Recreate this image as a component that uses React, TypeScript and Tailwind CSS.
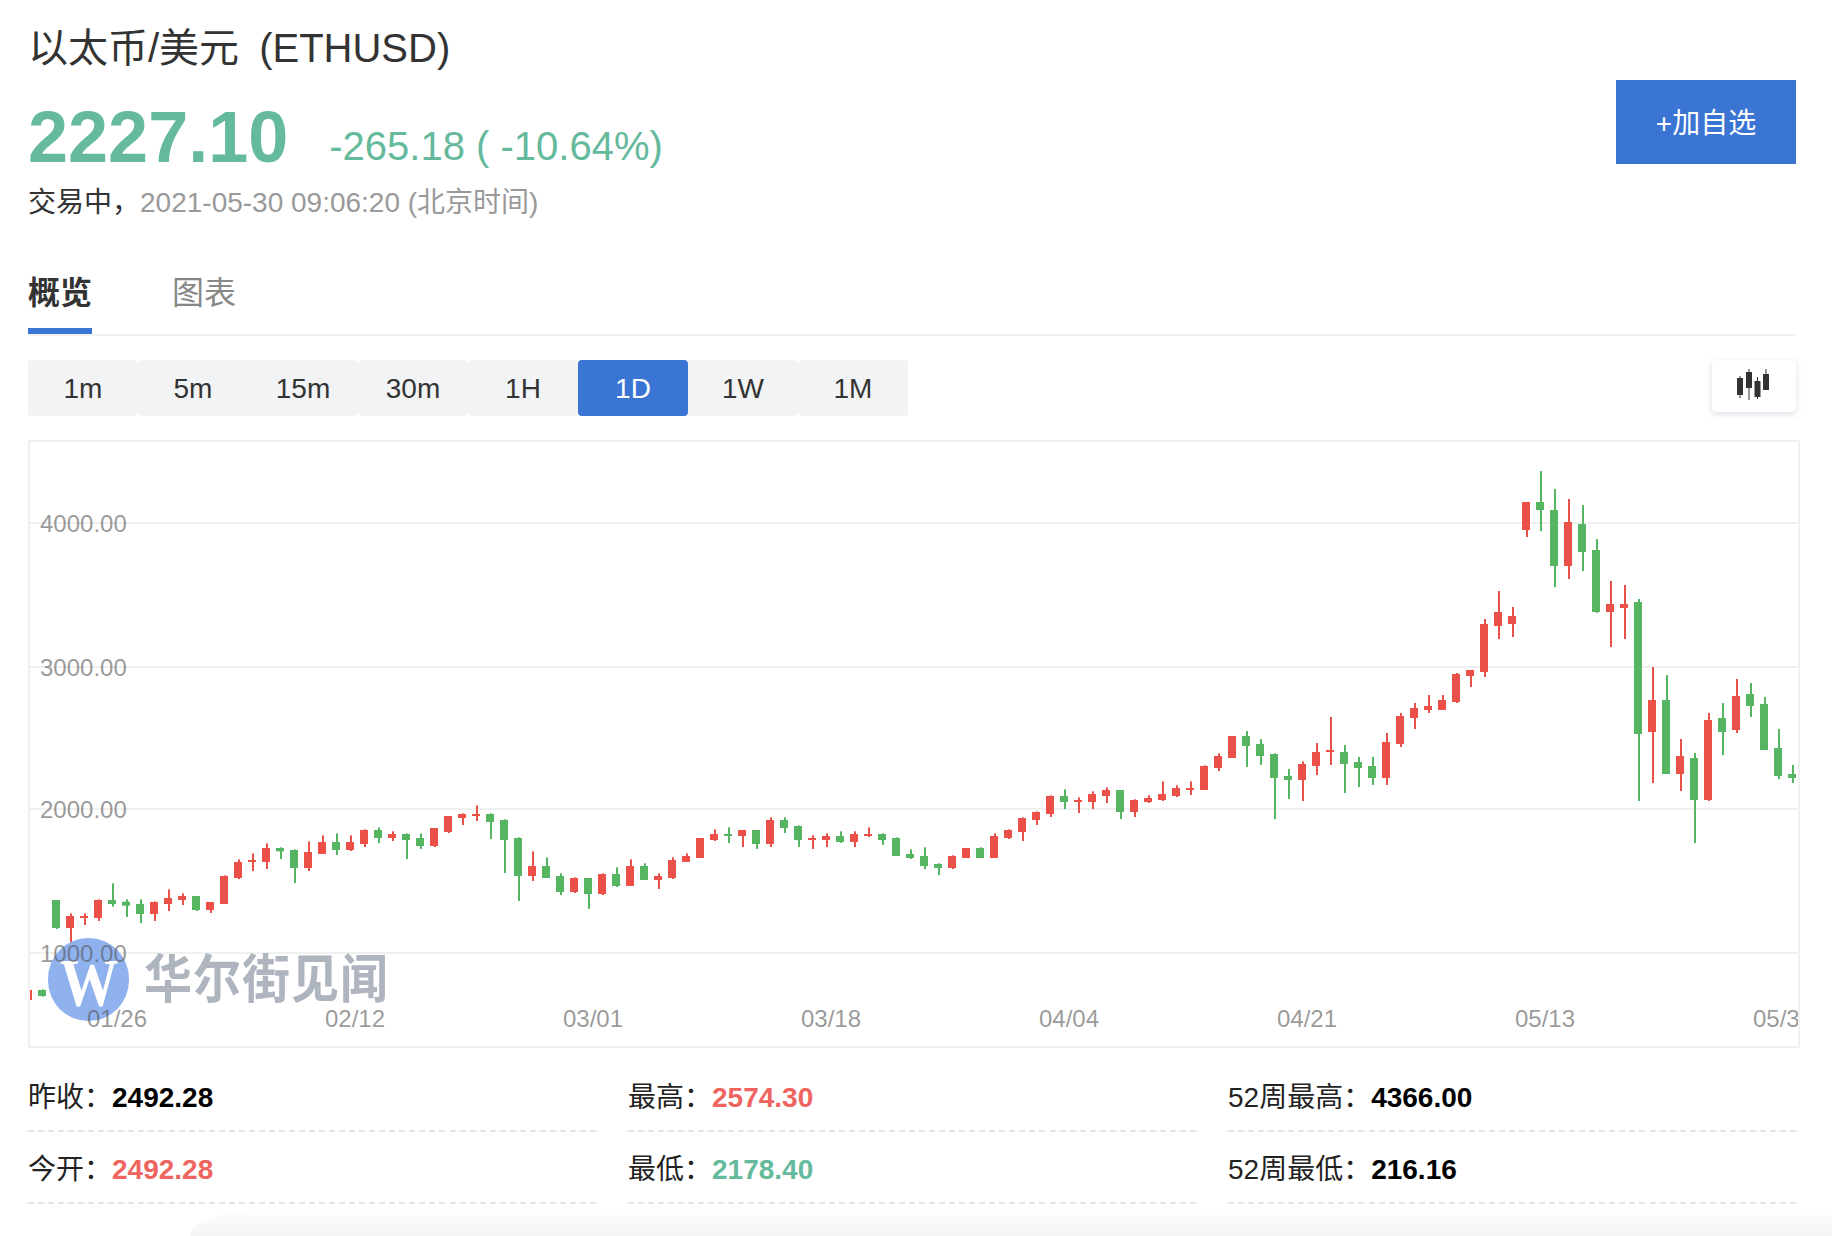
type Candle = [number, number, number, number, number]

// [up, wickTop, bodyTop, bodyBottom, wickBottom], read off the chart, y = page px * 3 from 740
const first: Candle[] = [
  [1, 750, 750, 780, 780], [0, 748, 750, 768, 770], [0, 480, 480, 564, 567], [1, 520, 528, 564, 615],
  [1, 520, 528, 534, 555], [1, 478, 480, 534, 543], [0, 430, 480, 492, 500], [0, 478, 485, 497, 531],
  [0, 478, 492, 522, 549], [1, 484, 486, 522, 543], [1, 448, 474, 492, 513], [1, 460, 468, 480, 495],
  [0, 468, 468, 510, 513], [1, 486, 486, 510, 519], [1, 406, 408, 492, 492], [1, 358, 366, 414, 417],
  [1, 340, 360, 366, 393], [1, 310, 324, 366, 387], [0, 322, 324, 334, 357], [0, 328, 330, 384, 429],
  [1, 304, 336, 384, 393], [1, 286, 306, 342, 342], [0, 280, 306, 330, 345], [1, 286, 306, 330, 333],
  [1, 268, 270, 312, 321], [0, 262, 270, 294, 309], [1, 274, 282, 294, 303], [0, 280, 282, 300, 357],
  [0, 280, 294, 318, 327], [1, 264, 264, 318, 321], [1, 228, 228, 276, 279], [1, 220, 222, 234, 255],
  [1, 196, 222, 228, 243], [0, 220, 222, 246, 297], [0, 238, 240, 300, 399], [0, 292, 294, 408, 483],
  [1, 334, 378, 408, 423], [0, 352, 378, 414, 414], [0, 400, 408, 456, 465], [1, 412, 414, 456, 459],
  [0, 414, 414, 462, 507], [1, 400, 402, 462, 465], [0, 382, 402, 438, 441], [1, 358, 378, 438, 438],
  [0, 370, 378, 420, 420], [1, 400, 408, 420, 447], [1, 352, 360, 414, 417], [1, 340, 348, 366, 366],
  [1, 294, 294, 354, 354], [1, 268, 282, 300, 303], [0, 262, 282, 288, 309], [1, 270, 270, 288, 321],
  [0, 270, 270, 312, 327], [1, 232, 240, 312, 321], [0, 232, 240, 264, 279], [0, 256, 258, 300, 321],
  [1, 286, 294, 300, 327], [1, 280, 288, 300, 321], [0, 274, 288, 306, 309], [1, 274, 282, 306, 321],
  [1, 262, 282, 288, 291], [0, 280, 282, 300, 315], [0, 292, 294, 348, 348], [0, 328, 342, 354, 357],
  [0, 322, 348, 378, 387], [0, 370, 372, 384, 405], [1, 346, 348, 384, 387], [1, 324, 324, 354, 354],
  [0, 322, 324, 354, 354], [1, 280, 288, 354, 354], [1, 268, 270, 294, 297], [1, 232, 234, 276, 303],
  [1, 214, 216, 240, 255], [1, 166, 168, 222, 231], [0, 148, 168, 186, 207], [1, 172, 180, 186, 219],
  [1, 154, 162, 186, 207], [1, 142, 150, 168, 189], [0, 150, 150, 216, 237], [1, 178, 180, 216, 231],
  [1, 166, 174, 186, 189], [1, 124, 162, 180, 183], [1, 136, 144, 168, 171], [1, 124, 144, 150, 165],
  [1, 76, 78, 150, 150], [1, 40, 48, 84, 93],
]

// same, y = page px * 3 from 440
const second: Candle[] = [
  [1, 888, 888, 954, 954], [0, 873, 888, 918, 981], [0, 897, 912, 948, 975], [0, 940, 942, 1014, 1137],
  [0, 987, 1008, 1020, 1077], [1, 964, 972, 1020, 1083], [1, 909, 936, 978, 1005], [1, 831, 930, 936, 975],
  [0, 915, 936, 972, 1059], [0, 951, 966, 984, 1041], [0, 951, 978, 1014, 1035], [1, 879, 906, 1014, 1035],
  [1, 819, 828, 912, 921], [1, 789, 804, 834, 867], [1, 765, 798, 810, 819], [1, 765, 780, 810, 810],
  [1, 699, 702, 786, 789], [1, 690, 690, 708, 741], [1, 537, 552, 696, 711], [1, 453, 516, 558, 597],
  [1, 501, 528, 552, 591], [1, 186, 186, 270, 291], [0, 93, 186, 210, 273], [0, 147, 210, 378, 441],
  [1, 177, 246, 378, 417], [0, 195, 252, 336, 393], [0, 297, 330, 516, 519], [1, 423, 492, 516, 621],
  [1, 435, 492, 504, 597], [0, 477, 486, 882, 1083], [1, 681, 780, 876, 1029], [0, 705, 780, 1002, 1002],
  [1, 897, 948, 1002, 1053], [0, 939, 954, 1080, 1209], [1, 819, 840, 1080, 1083], [0, 789, 834, 876, 945],
  [1, 717, 768, 870, 879], [0, 729, 762, 798, 831], [0, 771, 792, 930, 930], [0, 867, 924, 1008, 1017],
  [0, 975, 1002, 1014, 1029],
]

const candles = [
  ...first.map(([up, a, b, c, d]) => [up, 740 + a / 3, 740 + b / 3, 740 + c / 3, 740 + d / 3]),
  ...second.map(([up, a, b, c, d]) => [up, 440 + a / 3, 440 + b / 3, 440 + c / 3, 440 + d / 3]),
]

const gridLines = [
  { y: 522, label: '4000.00' },
  { y: 666, label: '3000.00' },
  { y: 808, label: '2000.00' },
  { y: 952, label: '1000.00' },
]

const dates = [
  { x: 87, label: '01/26' },
  { x: 325, label: '02/12' },
  { x: 563, label: '03/01' },
  { x: 801, label: '03/18' },
  { x: 1039, label: '04/04' },
  { x: 1277, label: '04/21' },
  { x: 1515, label: '05/13' },
  { x: 1753, label: '05/30' },
]

const periods = ['1m', '5m', '15m', '30m', '1H', '1D', '1W', '1M']

const stats = [
  { label: '昨收：', value: '2492.28', color: 'text-black' },
  { label: '最高：', value: '2574.30', color: 'text-[#ee6560]' },
  { label: '52周最高：', value: '4366.00', color: 'text-black' },
  { label: '今开：', value: '2492.28', color: 'text-[#ee6560]' },
  { label: '最低：', value: '2178.40', color: 'text-[#65b99c]' },
  { label: '52周最低：', value: '216.16', color: 'text-black' },
]

function CandleIcon() {
  return (
    <svg width="34" height="34" viewBox="0 0 34 34" className="fill-[#333]">
      <rect x="0" y="9" width="6" height="17" />
      <rect x="2.5" y="7" width="1" height="22" />
      <rect x="9" y="3" width="6" height="16" />
      <rect x="11.5" y="0" width="1" height="31" />
      <rect x="17.5" y="12" width="6" height="16" />
      <rect x="20" y="8" width="1" height="22" />
      <rect x="26" y="5" width="6" height="16" />
      <rect x="28.5" y="0" width="1" height="21" />
    </svg>
  )
}

function Chart() {
  return (
    <div className="relative h-[608px] w-[1772px] overflow-hidden border-2 border-[#f0f0f0]">
      <svg viewBox="30 442 1768 604" className="block h-[604px] w-[1768px]">
        {gridLines.map((line) => (
          <rect key={line.y} x="30" y={line.y} width="1768" height="2" className="fill-[#f0f0f0]" />
        ))}
        {candles.map(([up, wickTop, bodyTop, bodyBottom, wickBottom], i) => {
          const x = 24 + 14 * i
          return (
            <g key={i} className={up ? 'fill-[#ec5149]' : 'fill-[#56b561]'}>
              <rect x={x + 4} y={wickTop} width="2" height={wickBottom - wickTop} />
              <rect x={x} y={bodyTop} width="8" height={bodyBottom - bodyTop} />
            </g>
          )
        })}
      </svg>

      <div className="absolute left-[18px] top-[496px] flex h-[83px] w-[81px] items-center justify-center rounded-full bg-[#8fb2ee] pt-1">
        <span className="scale-x-[0.86] font-['Liberation_Serif',serif] text-[68px] font-bold leading-none text-white">W</span>
      </div>
      <div className="absolute left-[114px] top-[508px] scale-y-110 text-[48px] font-bold leading-[60px] tracking-[1px] text-[#aeb5bf]">
        华尔街见闻
      </div>

      <svg viewBox="30 442 1768 604" className="absolute left-0 top-0 h-[604px] w-[1768px] fill-[#555]/60 text-[24px]">
        {gridLines.map((line) => (
          <text key={line.y} x="40" y={line.y + 10}>
            {line.label}
          </text>
        ))}
        {dates.map((date) => (
          <text key={date.label} x={date.x} y="1027">
            {date.label}
          </text>
        ))}
      </svg>
    </div>
  )
}

export default function App() {
  return (
    <div className="relative h-[1236px] w-[1832px] overflow-hidden bg-white font-['Liberation_Sans','Noto_Sans_CJK_SC',sans-serif] text-[#333]">
      <div className="ml-7 w-[1768px] pt-6">
        <div className="flex justify-between">
          <div>
            <h1 className="flex text-[40px] font-normal leading-[48px]">
              以太币/美元<span className="ml-5">(ETHUSD)</span>
            </h1>
            <div className="mt-[29px] flex h-[72px] items-baseline gap-[41px] text-[#65b99c]">
              <span className="text-[72px] font-bold leading-[72px]">2227.10</span>
              <span className="-translate-y-0.5 text-[40px] leading-[72px]">-265.18 ( -10.64%)</span>
            </div>
            <div className="mt-3 text-[28px] leading-9">
              交易中，<span className="text-[#999]">2021-05-30 09:06:20 (北京时间)</span>
            </div>
          </div>
          <button className="mt-14 flex h-[84px] w-[180px] items-center justify-center bg-[#3a75d4] pt-[3px] text-[28px] text-white">
            +加自选
          </button>
        </div>

        <div className="mt-[43px] flex h-[72px] gap-[80px] border-b-2 border-[#f1f1f1]">
          <div className="h-[70px] border-b-[6px] border-[#3a75d4] pt-[5px] text-[32px] font-bold leading-[48px]">概览</div>
          <div className="pt-[5px] text-[32px] leading-[48px] text-[#888]">图表</div>
        </div>

        <div className="mt-6 flex items-start justify-between">
          <div className="flex">
            {periods.map((period) => (
              <div
                key={period}
                className={
                  period === '1D'
                    ? 'flex h-14 w-[110px] items-center justify-center rounded-[4px] bg-[#3a75d4] pt-[2px] text-[28px] text-white'
                    : 'flex h-14 w-[110px] items-center justify-center rounded-[4px] bg-[#f2f3f5] pt-[2px] text-[28px]'
                }
              >
                {period}
              </div>
            ))}
          </div>
          <div className="flex h-[52px] w-[84px] items-center justify-center rounded-[4px] bg-white shadow-[0_2px_6px_rgba(60,80,120,0.18)]">
            <CandleIcon />
          </div>
        </div>

        <div className="mt-6">
          <Chart />
        </div>

        <div className="mt-3 grid grid-cols-3 gap-x-8">
          {stats.map((stat) => (
            <div key={stat.label} className="flex h-[72px] flex-col justify-end">
              <div className="flex flex-1 items-center pt-[6px] text-[28px] text-[#222]">
                {stat.label}
                <span className={`font-bold ${stat.color}`}>{stat.value}</span>
              </div>
              <div className="h-[2px] bg-[repeating-linear-gradient(90deg,#e5e5e5_0_6px,transparent_6px_10.036px)]" />
            </div>
          ))}
        </div>
      </div>
      <div className="absolute bottom-0 left-[190px] right-0 h-[30px] rounded-tl-[100px_30px] bg-gradient-to-b from-white to-[#f5f5f5]" />
    </div>
  )
}
